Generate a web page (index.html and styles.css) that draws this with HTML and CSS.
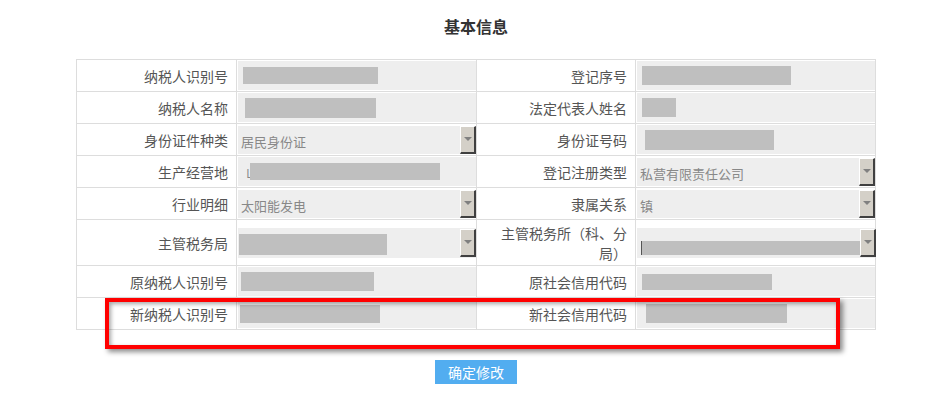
FILE: index.html
```html
<!DOCTYPE html>
<html lang="zh-CN">
<head>
<meta charset="utf-8">
<title>基本信息</title>
<link rel="stylesheet" href="styles.css">
</head>
<body>
<div class="page">
  <div class="title">基本信息</div>
  <table class="info">
    <colgroup>
      <col class="c-label"><col class="c-value"><col class="c-label2"><col class="c-value">
    </colgroup>
    <tr>
      <td class="label">纳税人识别号</td>
      <td class="value"><div class="field"><span class="redact" style="margin-left:5px;width:135px;height:17px"></span></div></td>
      <td class="label">登记序号</td>
      <td class="value"><div class="field"><span class="redact" style="margin-left:5px;width:149px;height:19px"></span></div></td>
    </tr>
    <tr>
      <td class="label">纳税人名称</td>
      <td class="value"><div class="field"><span class="redact" style="margin-left:7px;width:131px;height:20px"></span></div></td>
      <td class="label">法定代表人姓名</td>
      <td class="value"><div class="field"><span class="redact" style="margin-left:5px;width:34px;height:19px"></span></div></td>
    </tr>
    <tr>
      <td class="label">身份证件种类</td>
      <td class="value"><div class="select"><span class="opt">居民身份证</span><span class="arrow"></span></div></td>
      <td class="label">身份证号码</td>
      <td class="value"><div class="field"><span class="redact" style="margin-left:8px;width:129px;height:20px"></span></div></td>
    </tr>
    <tr>
      <td class="label">生产经营地</td>
      <td class="value"><div class="field"><span class="glyph">山</span><span class="redact" style="margin-left:-9px;width:190px;height:17px"></span></div></td>
      <td class="label">登记注册类型</td>
      <td class="value"><div class="select"><span class="opt">私营有限责任公司</span><span class="arrow"></span></div></td>
    </tr>
    <tr>
      <td class="label">行业明细</td>
      <td class="value"><div class="select"><span class="opt">太阳能发电</span><span class="arrow"></span></div></td>
      <td class="label">隶属关系</td>
      <td class="value"><div class="select"><span class="opt">镇</span><span class="arrow"></span></div></td>
    </tr>
    <tr class="tall">
      <td class="label">主管税务局</td>
      <td class="value"><div class="select sel-block"><span class="redact" style="margin-left:1px;width:148px;height:21px"></span><span class="arrow"></span></div></td>
      <td class="label two-line">主管税务所（科、分<br>局）</td>
      <td class="value"><div class="select sel-block"><span class="redact cursor" style="margin-left:4px;width:218px;height:14px"></span><span class="arrow"></span></div></td>
    </tr>
    <tr>
      <td class="label">原纳税人识别号</td>
      <td class="value"><div class="field"><span class="redact" style="margin-left:3px;width:133px;height:19px"></span></div></td>
      <td class="label">原社会信用代码</td>
      <td class="value"><div class="field"><span class="redact" style="margin-left:5px;width:130px;height:16px"></span></div></td>
    </tr>
    <tr>
      <td class="label">新纳税人识别号</td>
      <td class="value"><div class="field"><span class="redact" style="margin-left:2px;width:140px;height:18px"></span></div></td>
      <td class="label">新社会信用代码</td>
      <td class="value"><div class="field"><span class="redact" style="margin-left:9px;width:141px;height:19px"></span></div></td>
    </tr>
  </table>
  <div class="actions"><button class="btn" type="button">确定修改</button></div>
  <div class="highlight"></div>
</div>
</body>
</html>
```

FILE: styles.css
```css
html, body {
  margin: 0;
  padding: 0;
  background: #fff;
}
body {
  font-family: "Noto Sans CJK SC", "Noto Sans", sans-serif;
  color: #555;
}
.page {
  position: relative;
  width: 800px;
  margin-left: 76px;
}
.title {
  box-sizing: border-box;
  height: 59px;
  padding-top: 15px;
  text-align: center;
  font-size: 16px;
  line-height: 22px;
  font-weight: bold;
  color: #333;
}
.info {
  width: 800px;
  border-collapse: collapse;
  table-layout: fixed;
}
.c-label { width: 160px; }
.c-value { width: 240px; }
.c-label2 { width: 159px; }
.info td {
  border: 1px solid #ddd;
  height: 29px;
  padding: 0;
}
.info tr.tall td { height: 43px; }
.info td.label {
  text-align: right;
  padding-right: 8px;
  font-size: 14px;
  line-height: 18px;
  color: #555;
}
.info td.label.two-line { line-height: 20px; }
.info td.value {
  padding: 1px 0 1px 1px;
  vertical-align: middle;
}
.field {
  height: 29px;
  background: #eee;
  display: flex;
  align-items: center;
}
.redact {
  display: inline-block;
  background: #bfbfbf;
  flex: none;
}
.redact.cursor { border-left: 1px solid #555; }
.glyph {
  margin-left: 8px;
  font-size: 13px;
  color: #888;
  width: 13px;
  overflow: hidden;
}
.select {
  height: 28px;
  background: #eee;
  display: flex;
  align-items: flex-end;
  justify-content: space-between;
}
.select.sel-block {
  align-items: center;
  height: 30px;
}
.select.sel-block .redact { align-self: flex-end; margin-bottom: 3px; }
.opt {
  font-size: 13px;
  line-height: 20px;
  color: #888;
  padding-left: 3px;
  padding-bottom: 2px;
}
.arrow {
  box-sizing: border-box;
  align-self: center;
  width: 16px;
  height: 28px;
  background: #d4d0c8;
  border-top: 1px solid #fff;
  border-left: 1px solid #fff;
  border-right: 2px solid #404040;
  border-bottom: 2px solid #404040;
  position: relative;
  flex: none;
}
.arrow::after {
  content: "";
  position: absolute;
  left: 3px;
  top: 10px;
  border-left: 4px solid transparent;
  border-right: 4px solid transparent;
  border-top: 4px solid #808080;
}
.actions {
  display: flex;
  justify-content: center;
  padding-top: 30px;
}
.btn {
  width: 82px;
  height: 24px;
  border: 0;
  padding: 0;
  background: #52adf0;
  color: #fff;
  font-family: "Noto Sans CJK SC", "Noto Sans", sans-serif;
  font-size: 14px;
  line-height: 24px;
}
.highlight {
  position: absolute;
  left: 29px;
  top: 298px;
  width: 735px;
  height: 51px;
  box-sizing: border-box;
  border: 4px solid #f00;
  box-shadow: 3px 3px 5px rgba(0, 0, 0, 0.45), inset 2px 2px 4px rgba(0, 0, 0, 0.35);
}
```
